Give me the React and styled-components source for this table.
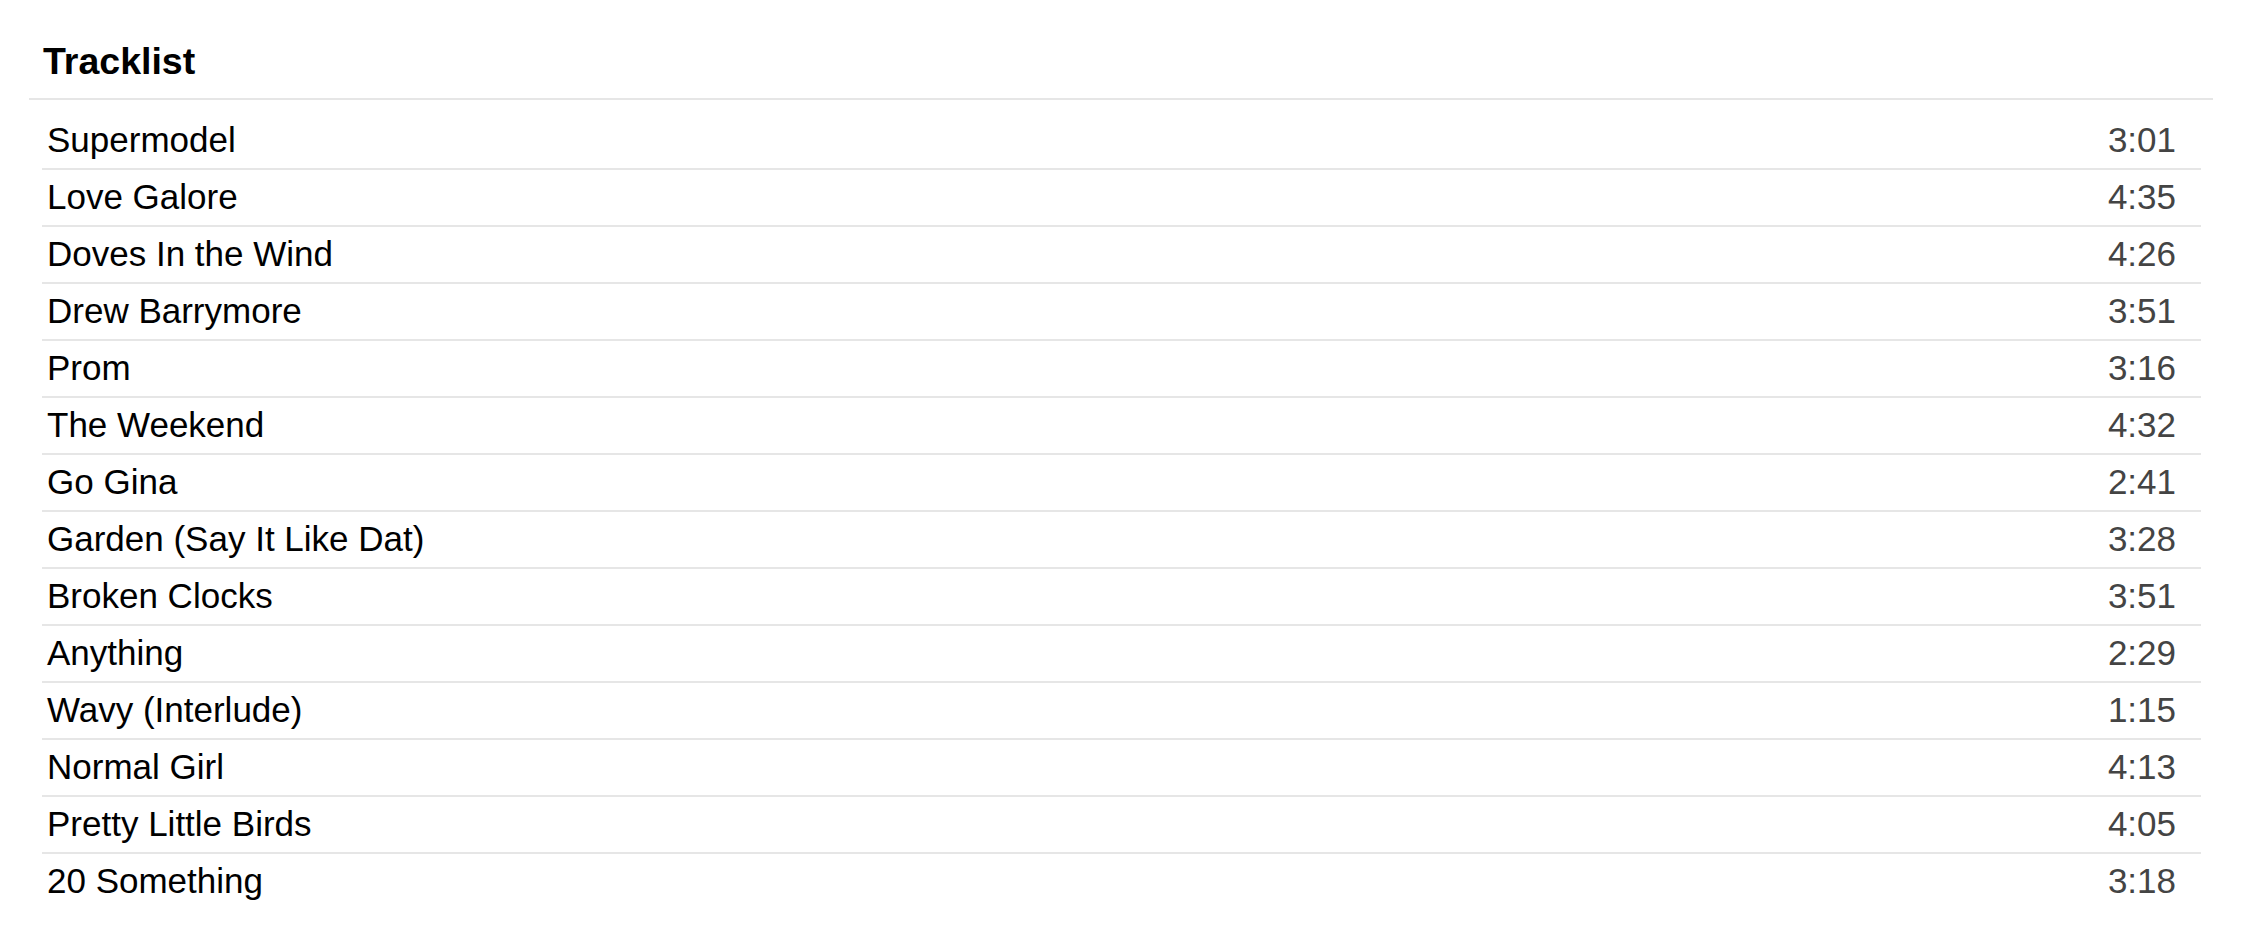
import styled, { createGlobalStyle } from 'styled-components';

const GlobalStyle = createGlobalStyle`
  body {
    margin: 0;
    background: #ffffff;
    font-family: "Liberation Sans", Arial, sans-serif;
  }
`;

const tracks = [
  { title: 'Supermodel', time: '3:01' },
  { title: 'Love Galore', time: '4:35' },
  { title: 'Doves In the Wind', time: '4:26' },
  { title: 'Drew Barrymore', time: '3:51' },
  { title: 'Prom', time: '3:16' },
  { title: 'The Weekend', time: '4:32' },
  { title: 'Go Gina', time: '2:41' },
  { title: 'Garden (Say It Like Dat)', time: '3:28' },
  { title: 'Broken Clocks', time: '3:51' },
  { title: 'Anything', time: '2:29' },
  { title: 'Wavy (Interlude)', time: '1:15' },
  { title: 'Normal Girl', time: '4:13' },
  { title: 'Pretty Little Birds', time: '4:05' },
  { title: '20 Something', time: '3:18' },
];

const Wrapper = styled.section`
  padding: 0 38px 0 29px;
`;

const Heading = styled.h2`
  margin: 0;
  padding: 40px 14px 16px;
  font-size: 37.5px;
  font-weight: 700;
  line-height: 42px;
  color: #000000;
  border-bottom: 2px solid #e6e6e6;
`;

const TrackList = styled.ul`
  list-style: none;
  margin: 0 12px 0 13px;
  padding: 12px 0 0;
`;

const TrackRow = styled.li`
  display: flex;
  justify-content: space-between;
  align-items: baseline;
  padding: 7px 25px 8px 5px;
  font-size: 35px;
  line-height: 40px;
  border-top: 2px solid #e6e6e6;

  &:first-child {
    padding-top: 8px;
    border-top: none;
  }
`;

const Title = styled.span`
  color: #000000;
`;

const Duration = styled.span`
  color: #444444;
`;

const App = () => {
  return (
    <>
      <GlobalStyle />
      <Wrapper>
        <Heading>Tracklist</Heading>
        <TrackList>
          {tracks.map((t) => (
            <TrackRow key={t.title}>
              <Title>{t.title}</Title>
              <Duration>{t.time}</Duration>
            </TrackRow>
          ))}
        </TrackList>
      </Wrapper>
    </>
  );
};

export default App;
